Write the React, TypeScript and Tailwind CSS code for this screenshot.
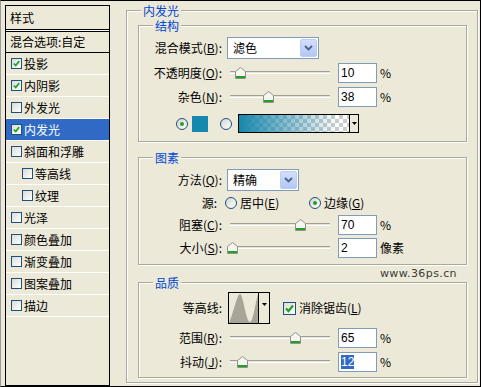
import React from "react";

function CheckBox({ checked, big }: { checked?: boolean; big?: boolean }) {
  return (
    <span
      className={
        (big ? "w-[13px] h-[13px]" : "w-[11px] h-[11px]") +
        " shrink-0 border border-[#1c5180] bg-[linear-gradient(135deg,#dcdcd4,#ffffff)] flex items-center justify-center"
      }
    >
      {checked && (
        <svg viewBox="0 0 9 9" className={big ? "w-[9px] h-[9px]" : "w-[7px] h-[7px]"}>
          <path d="M1 4.5 L3.5 7 L8 1.5" fill="none" stroke="#21a121" strokeWidth="2.2" />
        </svg>
      )}
    </span>
  );
}

function Radio({ checked }: { checked?: boolean }) {
  return (
    <span className="w-[12px] h-[12px] shrink-0 rounded-full border border-[#1c5180] bg-[linear-gradient(135deg,#d6d6ce,#ffffff)] flex items-center justify-center">
      {checked && <span className="w-[4px] h-[4px] rounded-full bg-[#21a121]" />}
    </span>
  );
}

function Slider({ value }: { value: number }) {
  return (
    <div className="relative w-[100px] h-[12px] shrink-0">
      <div className="absolute left-0 right-0 top-[4px] h-[3px] bg-[#e6e4d8] border-t border-t-[#a19f92] border-b border-b-white" />
      <svg className="absolute top-0" style={{ left: value - 5 }} width="11" height="12" viewBox="0 0 11 12">
        <path d="M0.5 4.5 L5.5 0.5 L10.5 4.5 V11.5 H0.5 Z" fill="#f6f6f0" stroke="#8f9090" />
        <rect x="1" y="9" width="9" height="2" fill="#21a121" />
      </svg>
    </div>
  );
}

function Num({ v, sel }: { v: string; sel?: boolean }) {
  return (
    <div className="w-[39px] h-[20px] shrink-0 border border-[#7f9db9] bg-white flex items-center pl-[2px] font-['Liberation_Sans',sans-serif] text-[12px] leading-[14px]">
      <span className={sel ? "bg-[#316ac5] text-white" : ""}>{v}</span>
    </div>
  );
}

function Select({ text, w }: { text: string; w: string }) {
  return (
    <div className={w + " h-[22px] shrink-0 border border-[#7f9db9] bg-white flex items-center p-[1px]"}>
      <span className="flex-1 pl-[4px] leading-[14px]">{text}</span>
      <span className="w-[17px] h-full rounded-[2px] border border-[#b9cdf4] bg-[linear-gradient(#d3defd,#b3c6f5)] flex items-center justify-center">
        <svg width="9" height="6" viewBox="0 0 9 6">
          <path d="M1 1 L4.5 4.5 L8 1" fill="none" stroke="#4d6185" strokeWidth="1.8" />
        </svg>
      </span>
    </div>
  );
}

function Group({ title, className, children }: { title: string; className: string; children?: React.ReactNode }) {
  return (
    <div className={"relative border border-[#aca899] shadow-[inset_1px_1px_0_#fff,1px_1px_0_#fff] " + className}>
      <span className="absolute top-[-7px] left-[14px] px-[2px] bg-[#ece9d8] text-[#0046d5] leading-[13px]">{title}</span>
      {children}
    </div>
  );
}

function Label({ children, w = "w-[83px]" }: { children: React.ReactNode; w?: string }) {
  return <span className={w + " shrink-0 text-right leading-[14px] whitespace-nowrap"}>{children}</span>;
}

function SliderRow({
  label,
  value,
  unit,
  sel,
  className,
}: {
  label: React.ReactNode;
  value: number;
  unit: string;
  sel?: boolean;
  className: string;
}) {
  return (
    <div className={"flex items-center h-[20px] " + className}>
      <Label>{label}</Label>
      <div className="ml-[8px]">
        <Slider value={value} />
      </div>
      <div className="ml-[8px]">
        <Num v={String(value)} sel={sel} />
      </div>
      <span className="ml-[3px] leading-[14px]">{unit}</span>
    </div>
  );
}

const Tri = () => (
  <svg width="5" height="3" viewBox="0 0 5 3">
    <path d="M0 0H5L2.5 3Z" fill="#000" />
  </svg>
);

const items: { t: string; c?: boolean; sel?: boolean; sub?: boolean }[] = [
  { t: "投影", c: true },
  { t: "内阴影", c: true },
  { t: "外发光" },
  { t: "内发光", c: true, sel: true },
  { t: "斜面和浮雕" },
  { t: "等高线", sub: true },
  { t: "纹理", sub: true },
  { t: "光泽" },
  { t: "颜色叠加" },
  { t: "渐变叠加" },
  { t: "图案叠加" },
  { t: "描边" },
];

export default function App() {
  return (
    <div className="w-[481px] h-[387px] bg-[#ece9d8] border border-black border-l-[#9a9a9a] flex items-start text-[12px] text-black font-['Noto_Sans_CJK_SC','Liberation_Sans',sans-serif] overflow-hidden">
      {/* left list */}
      <div className="ml-[4px] mt-[4px] w-[105px] h-[381px] shrink-0 border border-black flex flex-col">
        <div className="h-[24px] border-b border-black flex items-center pl-[4px] leading-[14px]">样式</div>
        <div className="h-px bg-white" />
        <div className="h-[22px] border-y border-black flex items-center pl-[4px] leading-[14px]">混合选项:自定</div>
        {items.map((it) => (
          <div
            key={it.t}
            className={
              "h-[22px] border-b border-white flex items-center gap-[2px] " +
              (it.sub ? "pl-[16px] " : "pl-[5px] ") +
              (it.sel ? "bg-[#316ac5] text-white" : "")
            }
          >
            <CheckBox checked={it.c} />
            <span className="leading-[14px]">{it.t}</span>
          </div>
        ))}
      </div>

      {/* right outer group */}
      <Group title="内发光" className="ml-[16px] mt-[9px] w-[352px] h-[373px] shrink-0 pt-[14px] pl-[11px] flex flex-col">
        <Group title="结构" className="w-[329px] h-[117px] shrink-0 pt-[11px] flex flex-col">
          <div className="flex items-center h-[22px]">
            <Label>
              混合模式(<u>B</u>):
            </Label>
            <div className="ml-[5px]">
              <Select text="滤色" w="w-[92px]" />
            </div>
          </div>
          <SliderRow
            className="mt-[4px]"
            label={
              <>
                不透明度(<u>O</u>):
              </>
            }
            value={10}
            unit="%"
          />
          <SliderRow
            className="mt-[4px]"
            label={
              <>
                杂色(<u>N</u>):
              </>
            }
            value={38}
            unit="%"
          />
          <div className="flex items-center h-[19px] mt-[7px]">
            <span className="w-[37px] shrink-0" />
            <Radio checked />
            <span className="ml-[4px] w-[16px] h-[16px] bg-[#1589ad] shrink-0" />
            <span className="ml-[12px]">
              <Radio />
            </span>
            <div className="ml-[6px] w-[121px] h-[19px] border border-black flex shrink-0">
              <div className="flex-1 bg-[image:repeating-conic-gradient(#cccccc_0%_25%,#ffffff_0%_50%)] bg-[length:8px_8px]">
                <div className="w-full h-full bg-[linear-gradient(to_right,#1787ab,rgba(23,135,171,0.5)_45%,rgba(23,135,171,0)_90%)]" />
              </div>
              <div className="w-[9px] border-l border-black bg-[#ece9d8] flex items-center justify-center">
                <Tri />
              </div>
            </div>
          </div>
        </Group>

        <Group title="图素" className="w-[329px] h-[108px] shrink-0 mt-[15px] pt-[11px] flex flex-col">
          <div className="flex items-center h-[22px]">
            <Label>
              方法(<u>Q</u>):
            </Label>
            <div className="ml-[5px]">
              <Select text="精确" w="w-[72px]" />
            </div>
          </div>
          <div className="flex items-center h-[22px] mt-[1px]">
            <Label w="w-[78px]">源:</Label>
            <div className="ml-[8px] w-[84px] flex items-center shrink-0">
              <Radio />
              <span className="ml-[3px] leading-[14px]">
                居中(<u>E</u>)
              </span>
            </div>
            <Radio checked />
            <span className="ml-[3px] leading-[14px]">
              边缘(<u>G</u>)
            </span>
          </div>
          <SliderRow
            className="mt-[1px]"
            label={
              <>
                阻塞(<u>C</u>):
              </>
            }
            value={70}
            unit="%"
          />
          <SliderRow
            className="mt-[3px]"
            label={
              <>
                大小(<u>S</u>):
              </>
            }
            value={2}
            unit="像素"
          />
        </Group>

        <div className="w-[329px] h-[17px] shrink-0 flex items-center justify-end pr-[10px] font-['DejaVu_Sans',sans-serif] text-[11px] tracking-[0.4px] text-[#3a3a3a] leading-[13px]">
          www.36ps.cn
        </div>

        <Group title="品质" className="w-[329px] h-[96px] shrink-0 pt-[9px] flex flex-col">
          <div className="flex items-center h-[32px]">
            <Label>等高线:</Label>
            <div className="ml-[6px] w-[42px] h-[32px] border border-black flex shrink-0">
              <svg className="w-[29px] h-[30px]" viewBox="0 0 29 30" preserveAspectRatio="none">
                <rect width="29" height="30" fill="#ece9d8" />
                <path d="M0 30 C4 22 8 1 11 1 C14 1 17 29 21 29 C24 29 26 12 29 1 L29 30 Z" fill="#a8a496" />
              </svg>
              <div className="w-[11px] border-l border-black bg-[#ece9d8] flex justify-center pt-[10px]">
                <div className="h-[3px] flex">
                  <Tri />
                </div>
              </div>
            </div>
            <div className="ml-[13px]">
              <CheckBox checked big />
            </div>
            <span className="ml-[3px] leading-[14px]">
              消除锯齿(<u>L</u>)
            </span>
          </div>
          <SliderRow
            className="mt-[4px]"
            label={
              <>
                范围(<u>R</u>):
              </>
            }
            value={65}
            unit="%"
          />
          <SliderRow
            className="mt-[4px]"
            label={
              <>
                抖动(<u>J</u>):
              </>
            }
            value={12}
            unit="%"
            sel
          />
        </Group>
      </Group>
    </div>
  );
}
